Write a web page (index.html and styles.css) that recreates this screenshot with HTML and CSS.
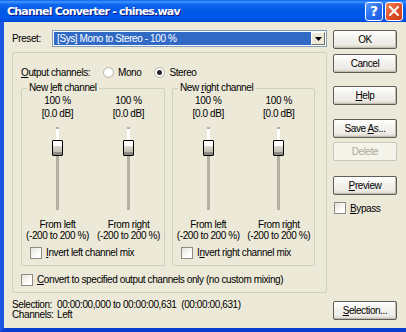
FILE: index.html
```html
<!DOCTYPE html>
<html>
<head>
<meta charset="utf-8">
<link rel="stylesheet" href="styles.css">
</head>
<body>
<div class="window">
  <div class="titlebar">
    <span class="title">Channel Converter - chines.wav</span>
    <span class="tb-btn help">?</span>
    <span class="tb-btn close">
      <svg width="10" height="10" viewBox="0 0 10 10"><path d="M1 1L9 9M9 1L1 9" stroke="#fff" stroke-width="2" stroke-linecap="square"/></svg>
    </span>
  </div>
  <div class="client">
    <div class="main">
      <div class="preset-row">
        <span class="preset-label">Preset:</span>
        <div class="combo">
          <span class="combo-value">[Sys] Mono to Stereo - 100 %</span>
          <span class="combo-btn"><svg width="7" height="4" viewBox="0 0 7 4"><path d="M0 0H7L3.5 4Z" fill="#000"/></svg></span>
        </div>
      </div>
      <div class="frame">
        <div class="output-row">
          <span class="output-label"><u>O</u>utput channels:</span>
          <span class="radio"></span><span class="radio-text">Mono</span>
          <span class="radio checked"></span><span class="radio-text">Stereo</span>
        </div>
        <div class="groups">
          <fieldset class="group left">
            <legend>New <u>l</u>eft channel</legend>
            <div class="cols">
              <div class="col">
                <div class="val">100 %</div>
                <div class="val">[0.0 dB]</div>
                <div class="slider"><div class="track"></div><div class="thumb"></div></div>
                <div class="cap">From left</div>
                <div class="cap">(-200 to 200 %)</div>
              </div>
              <div class="col">
                <div class="val">100 %</div>
                <div class="val">[0.0 dB]</div>
                <div class="slider"><div class="track"></div><div class="thumb"></div></div>
                <div class="cap">From right</div>
                <div class="cap">(-200 to 200 %)</div>
              </div>
            </div>
            <div class="check-row"><span class="check"></span><span><u>I</u>nvert left channel mix</span></div>
          </fieldset>
          <fieldset class="group right">
            <legend>New <u>r</u>ight channel</legend>
            <div class="cols">
              <div class="col">
                <div class="val">100 %</div>
                <div class="val">[0.0 dB]</div>
                <div class="slider"><div class="track"></div><div class="thumb"></div></div>
                <div class="cap">From left</div>
                <div class="cap">(-200 to 200 %)</div>
              </div>
              <div class="col">
                <div class="val">100 %</div>
                <div class="val">[0.0 dB]</div>
                <div class="slider"><div class="track"></div><div class="thumb"></div></div>
                <div class="cap">From right</div>
                <div class="cap">(-200 to 200 %)</div>
              </div>
            </div>
            <div class="check-row"><span class="check"></span><span>I<u>n</u>vert right channel mix</span></div>
          </fieldset>
        </div>
        <div class="convert-row"><span class="check"></span><span><u>C</u>onvert to specified output channels only (no custom mixing)</span></div>
      </div>
      <div class="info">
        <span class="info-label">Selection:</span><span>00:00:00,000 to 00:00:00,631&nbsp; (00:00:00,631)</span>
        <span class="info-label">Channels:</span><span>Left</span>
      </div>
    </div>
    <div class="buttons">
      <div class="btn b-ok"><span>OK</span></div>
      <div class="btn b-cancel"><span>Cancel</span></div>
      <div class="btn b-help"><span><u>H</u>elp</span></div>
      <div class="btn b-save"><span>Save <u>A</u>s...</span></div>
      <div class="btn b-delete disabled"><span>Delete</span></div>
      <div class="btn b-preview"><span><u>P</u>review</span></div>
      <div class="bypass"><span class="check"></span><span><u>B</u>ypass</span></div>
      <div class="btn b-sel"><span><u>S</u>election...</span></div>
    </div>
  </div>
</div>
</body>
</html>
```

FILE: styles.css
```css
* { box-sizing: border-box; }
html, body { margin: 0; padding: 0; }
body {
  width: 406px; height: 332px; overflow: hidden;
  font-family: "Liberation Sans", Arial, sans-serif;
  font-size: 10px; letter-spacing: -0.4px; color: #000; background: #ECE9D8;
}
u { text-decoration: underline; text-underline-offset: 1px; }
.window { width: 406px; height: 332px; display: flex; flex-direction: column; }

.titlebar {
  height: 22px; flex: none; display: flex; align-items: center;
  padding: 0 3px 0 7px; gap: 2px;
  background: linear-gradient(to bottom, #0A5FEF 0%, #3D95FF 8%, #1267F0 20%, #0058E6 50%, #0059EC 80%, #0048D4 100%);
}
.title {
  flex: 1; color: #fff; font-weight: bold; font-size: 11px;
  font-family: "DejaVu Sans", sans-serif; letter-spacing: -0.8px;
  text-shadow: 1px 1px 0 #0A1883;
}
.tb-btn {
  width: 18px; height: 19px; border: 1px solid #fff; border-radius: 3px;
  display: flex; align-items: center; justify-content: center;
  color: #fff; font-weight: bold; font-size: 14px; letter-spacing: 0;
  font-family: "DejaVu Sans", sans-serif;
}
.help { background: linear-gradient(135deg, #5A9BFF 0%, #2A6EF0 50%, #1D5CE0 100%); }
.close { background: linear-gradient(135deg, #F08A60 0%, #E2512A 50%, #C7401A 100%); }

.client {
  flex: 1; display: flex; gap: 6px;
  border-left: 4px solid #1A55E0; border-bottom: 4px solid #0A3ED0;
  padding: 8px 0 8px 8px;
}
.main { width: 315px; display: flex; flex-direction: column; }

.preset-row { display: flex; align-items: center; height: 17px; }
.preset-label { width: 40px; }
.combo {
  flex: 1; height: 17px; display: flex; padding: 1px;
  border: 1px solid #7F9DB9; background: #fff;
}
.combo-value {
  flex: 1; background: #316AC5; color: #fff; padding-left: 3px;
  line-height: 13px; white-space: nowrap;
}
.combo-btn {
  width: 14px; display: flex; align-items: center; justify-content: center;
  background: #ECE9D8; border: 1px solid; border-color: #fff #716F64 #716F64 #fff;
}

.frame {
  margin-top: 5px; height: 241px;
  border: 1px solid #D0D0BF; border-radius: 2px;
  padding: 13px 11px 0 8px;
}
.output-row { display: flex; align-items: center; height: 12px; }
.output-label { width: 82px; }
.radio {
  width: 11px; height: 11px; border-radius: 50%;
  border: 1px solid #B8B6AA; background: radial-gradient(circle at 40% 40%, #fff 50%, #E4E2D6);
  margin-right: 4px; display: flex; align-items: center; justify-content: center;
}
.radio.checked::after { content: ""; width: 5px; height: 5px; border-radius: 50%; background: #222; }
.radio-text { margin-right: 13px; }

.groups { display: flex; gap: 7px; margin-top: 4px; }
.group {
  margin: 0; padding: 1px 0 6px; min-width: 0;
  border: 1px solid #D0D0BF; border-radius: 2px;
}
.group.left { width: 144px; }
.group.right { width: 143px; }
legend { padding: 0 2px; margin-left: 5px; line-height: 12px; }
.cols { display: flex; }
.col { flex: 1; display: flex; flex-direction: column; align-items: center; }
.val { line-height: 12px; white-space: nowrap; }
.val + .val { margin-top: 1px; }
.cap { line-height: 11px; white-space: nowrap; }
.slider { position: relative; width: 11px; height: 83px; margin: 7px 0 9px; }
.track {
  width: 3px; height: 100%; margin: 0 auto;
  border-top: 2px solid #B5B2A5;
  background: linear-gradient(to bottom, #fff 0, #fff 13px, #B3B0A3 13px);
}
.thumb {
  position: absolute; left: 0; top: 13px; width: 11px; height: 16px;
  border: 1px solid #000; border-radius: 1px;
  background: linear-gradient(to bottom, #fff 0, #fff 35%, #D8D6CC 40%, #C6C3B7 75%, #8E8B80 80%, #8E8B80 100%);
}
.check-row { display: flex; align-items: center; gap: 4px; margin: 5px 0 0 8px; height: 13px; white-space: nowrap; }
.check {
  width: 12px; height: 12px; flex: none;
  border: 1px solid #8E8C84; background: linear-gradient(135deg, #E4E2D8, #fff 70%);
}
.convert-row { display: flex; align-items: center; gap: 4px; margin-top: 7px; height: 13px; white-space: nowrap; }

.info {
  margin-top: 7px; display: grid; grid-template-columns: 45px auto;
  line-height: 10px; white-space: nowrap;
}

.buttons { width: 64px; display: flex; flex-direction: column; }
.btn {
  height: 19px; display: flex; align-items: center; justify-content: center;
  border: 1px solid #5E5D57; border-radius: 2px;
  background: linear-gradient(to bottom, #fff 0%, #F4F3EE 40%, #ECEBE6 80%, #D6D0C5 100%);
  box-shadow: inset -1px -1px 0 #C1BDB1;
  white-space: nowrap;
}
.btn.disabled { color: #ACA899; border-color: #C9C7BA; box-shadow: none; background: #F5F4EA; }
.b-cancel { margin-top: 5px; }
.b-help { margin-top: 13px; }
.b-save { margin-top: 14px; }
.b-delete { margin-top: 4px; }
.b-preview { margin-top: 15px; }
.bypass { display: flex; align-items: center; gap: 4px; margin-top: 7px; height: 12px; padding-left: 1px; }
.b-sel { margin-top: auto; }
```
